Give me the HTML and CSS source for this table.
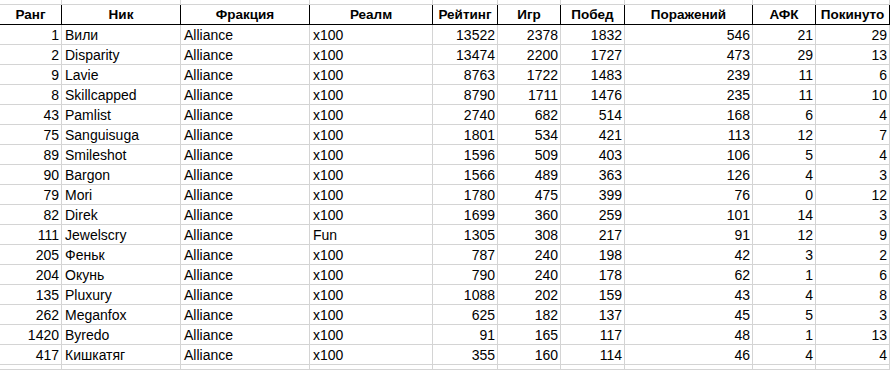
FILE: index.html
```html
<!DOCTYPE html>
<html lang="ru">
<head>
<meta charset="utf-8">
<title>Рейтинг</title>
<link rel="stylesheet" href="styles.css">
</head>
<body>
<div class="sheet">
  <div class="row strip"><div></div><div></div><div></div><div></div><div></div><div></div><div></div><div></div><div></div><div></div></div>
  <div class="row head">
    <div>Ранг</div><div>Ник</div><div>Фракция</div><div>Реалм</div><div>Рейтинг</div><div>Игр</div><div>Побед</div><div>Поражений</div><div>АФК</div><div>Покинуто</div>
  </div>
  <div class="row"><div class="n">1</div><div>Вили</div><div>Alliance</div><div>x100</div><div class="n">13522</div><div class="n">2378</div><div class="n">1832</div><div class="n">546</div><div class="n">21</div><div class="n">29</div></div>
  <div class="row"><div class="n">2</div><div>Disparity</div><div>Alliance</div><div>x100</div><div class="n">13474</div><div class="n">2200</div><div class="n">1727</div><div class="n">473</div><div class="n">29</div><div class="n">13</div></div>
  <div class="row"><div class="n">9</div><div>Lavie</div><div>Alliance</div><div>x100</div><div class="n">8763</div><div class="n">1722</div><div class="n">1483</div><div class="n">239</div><div class="n">11</div><div class="n">6</div></div>
  <div class="row"><div class="n">8</div><div>Skillcapped</div><div>Alliance</div><div>x100</div><div class="n">8790</div><div class="n">1711</div><div class="n">1476</div><div class="n">235</div><div class="n">11</div><div class="n">10</div></div>
  <div class="row"><div class="n">43</div><div>Pamlist</div><div>Alliance</div><div>x100</div><div class="n">2740</div><div class="n">682</div><div class="n">514</div><div class="n">168</div><div class="n">6</div><div class="n">4</div></div>
  <div class="row"><div class="n">75</div><div>Sanguisuga</div><div>Alliance</div><div>x100</div><div class="n">1801</div><div class="n">534</div><div class="n">421</div><div class="n">113</div><div class="n">12</div><div class="n">7</div></div>
  <div class="row"><div class="n">89</div><div>Smileshot</div><div>Alliance</div><div>x100</div><div class="n">1596</div><div class="n">509</div><div class="n">403</div><div class="n">106</div><div class="n">5</div><div class="n">4</div></div>
  <div class="row"><div class="n">90</div><div>Bargon</div><div>Alliance</div><div>x100</div><div class="n">1566</div><div class="n">489</div><div class="n">363</div><div class="n">126</div><div class="n">4</div><div class="n">3</div></div>
  <div class="row"><div class="n">79</div><div>Mori</div><div>Alliance</div><div>x100</div><div class="n">1780</div><div class="n">475</div><div class="n">399</div><div class="n">76</div><div class="n">0</div><div class="n">12</div></div>
  <div class="row"><div class="n">82</div><div>Direk</div><div>Alliance</div><div>x100</div><div class="n">1699</div><div class="n">360</div><div class="n">259</div><div class="n">101</div><div class="n">14</div><div class="n">3</div></div>
  <div class="row"><div class="n">111</div><div>Jewelscry</div><div>Alliance</div><div>Fun</div><div class="n">1305</div><div class="n">308</div><div class="n">217</div><div class="n">91</div><div class="n">12</div><div class="n">9</div></div>
  <div class="row"><div class="n">205</div><div>Феньк</div><div>Alliance</div><div>x100</div><div class="n">787</div><div class="n">240</div><div class="n">198</div><div class="n">42</div><div class="n">3</div><div class="n">2</div></div>
  <div class="row"><div class="n">204</div><div>Окунь</div><div>Alliance</div><div>x100</div><div class="n">790</div><div class="n">240</div><div class="n">178</div><div class="n">62</div><div class="n">1</div><div class="n">6</div></div>
  <div class="row"><div class="n">135</div><div>Pluxury</div><div>Alliance</div><div>x100</div><div class="n">1088</div><div class="n">202</div><div class="n">159</div><div class="n">43</div><div class="n">4</div><div class="n">8</div></div>
  <div class="row"><div class="n">262</div><div>Meganfox</div><div>Alliance</div><div>x100</div><div class="n">625</div><div class="n">182</div><div class="n">137</div><div class="n">45</div><div class="n">5</div><div class="n">3</div></div>
  <div class="row"><div class="n">1420</div><div>Byredo</div><div>Alliance</div><div>x100</div><div class="n">91</div><div class="n">165</div><div class="n">117</div><div class="n">48</div><div class="n">1</div><div class="n">13</div></div>
  <div class="row"><div class="n">417</div><div>Кишкатяг</div><div>Alliance</div><div>x100</div><div class="n">355</div><div class="n">160</div><div class="n">114</div><div class="n">46</div><div class="n">4</div><div class="n">4</div></div>
  <div class="row strip"><div></div><div></div><div></div><div></div><div></div><div></div><div></div><div></div><div></div><div></div></div>
</div>
</body>
</html>
```

FILE: styles.css
```css
html, body {
  margin: 0;
  padding: 0;
  background: #ffffff;
}

.sheet {
  width: 890px;
  height: 370px;
  overflow: hidden;
  font-family: "Liberation Sans", Arial, sans-serif;
  font-size: 14px;
  color: #000000;
}

.row {
  display: grid;
  grid-template-columns: 62px 119px 129px 123px 65px 63px 64px 128px 63px 74px;
  height: 20px;
}

.row > div {
  box-sizing: border-box;
  border-right: 1px solid #d4d4d4;
  border-bottom: 1px solid #d4d4d4;
  padding: 1px 2px 0 3px;
  line-height: 18px;
  white-space: nowrap;
  overflow: hidden;
}

.row > .n {
  text-align: right;
  padding-left: 2px;
  padding-right: 2px;
}

.strip {
  height: 5px;
}

.head > div {
  font-weight: bold;
  font-size: 13.5px;
  text-align: center;
  padding-left: 0;
  padding-right: 0;
  border-right-color: #000000;
  border-bottom-color: #000000;
}
```
